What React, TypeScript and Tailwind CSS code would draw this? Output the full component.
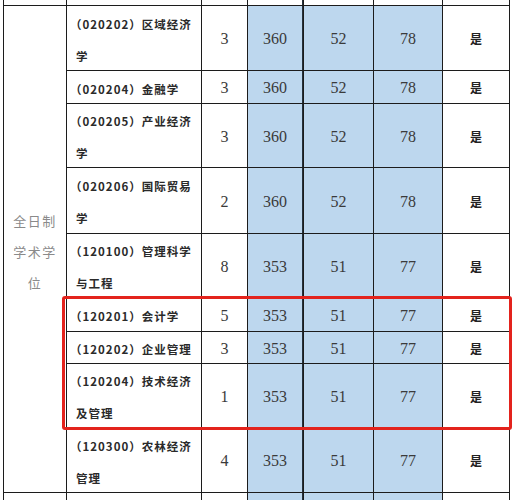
import React from "react";

type Row = { lines: string[]; n: string; a: string; b: string; c: string };

const rows: Row[] = [
  { lines: ["（020202）区域经济", "学"], n: "3", a: "360", b: "52", c: "78" },
  { lines: ["（020204）金融学"], n: "3", a: "360", b: "52", c: "78" },
  { lines: ["（020205）产业经济", "学"], n: "3", a: "360", b: "52", c: "78" },
  { lines: ["（020206）国际贸易", "学"], n: "2", a: "360", b: "52", c: "78" },
  { lines: ["（120100）管理科学", "与工程"], n: "8", a: "353", b: "51", c: "77" },
  { lines: ["（120201）会计学"], n: "5", a: "353", b: "51", c: "77" },
  { lines: ["（120202）企业管理"], n: "3", a: "353", b: "51", c: "77" },
  { lines: ["（120204）技术经济", "及管理"], n: "1", a: "353", b: "51", c: "77" },
  { lines: ["（120300）农林经济", "管理"], n: "4", a: "353", b: "51", c: "77" },
];

const cjk = "font-['Noto_Sans_CJK_SC',sans-serif]";
const serif = "font-['Liberation_Serif','Times_New_Roman',serif]";
const blue = "bg-[#bdd7ee]";

function NumCell({ v, bg }: { v: string; bg: string }) {
  return (
    <div className={`${bg} flex items-center justify-center pt-[2px] ${serif} text-[16px] text-[#3a3a3a]`}>
      {v}
    </div>
  );
}

export default function App() {
  return (
    <div className="w-[516px] h-[500px] overflow-hidden bg-white">
      <div className="relative">
        <div className="ml-[3px] w-[507px] grid gap-px bg-[#1c1c1c] px-px grid-cols-[62px_134px_45px_55px_69px_68px_66px] grid-rows-[5px_64px_32px_63px_65px_63px_33px_31px_63px_64px_20px]">
          {/* top partial row */}
          <div className="bg-white" />
          <div className="bg-white" />
          <div className="bg-white" />
          <div className="bg-white border-r border-[#24303c]" />
          <div className="bg-white" />
          <div className="bg-white" />
          <div className="bg-white" />

          {/* merged first column */}
          <div
            className={`row-span-9 bg-white flex flex-col items-center justify-center pt-[4px] ${cjk} text-[13px] leading-[31px] tracking-[1.5px] text-[#8a8a8a]`}
          >
            <span>全日制</span>
            <span>学术学</span>
            <span>位</span>
          </div>

          {rows.map((r, i) => (
            <React.Fragment key={i}>
              <div
                className={`bg-white flex flex-col justify-center pt-[3px] pl-[3px] ${cjk} text-[11.5px] font-bold tracking-[1px] leading-[32px] text-[#2a2a2a] whitespace-nowrap`}
              >
                {r.lines.map((l, j) => (
                  <span key={j} className={j > 0 ? "pl-[6px]" : ""}>
                    {l}
                  </span>
                ))}
              </div>
              <NumCell v={r.n} bg="bg-white" />
              <div className={`${blue} border-r border-[#24303c] flex items-center justify-center pt-[2px] ${serif} text-[16px] text-[#3a3a3a]`}>
                {r.a}
              </div>
              <NumCell v={r.b} bg={blue} />
              <NumCell v={r.c} bg={blue} />
              <div
                className={`bg-white flex items-center justify-center pt-[2px] ${cjk} text-[12px] font-bold text-[#222]`}
              >
                是
              </div>
            </React.Fragment>
          ))}

          {/* bottom partial row */}
          <div className="bg-white" />
          <div className="bg-white" />
          <div className="bg-white" />
          <div className={`${blue} border-r border-[#24303c]`} />
          <div className={blue} />
          <div className={blue} />
          <div className="bg-white" />
        </div>

        {/* red highlight box */}
        <div className="absolute left-[62px] top-[296px] w-[450px] h-[134px] border-[3px] border-[#e3231d] rounded-[3px] pointer-events-none" />
      </div>
    </div>
  );
}
